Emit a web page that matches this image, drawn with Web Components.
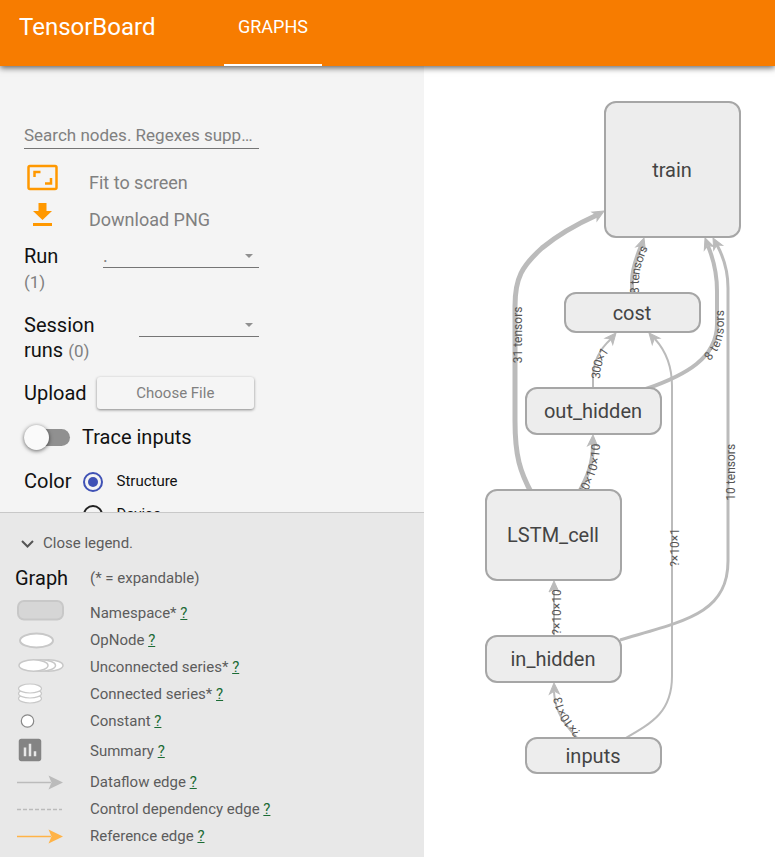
<!DOCTYPE html>
<html lang="en">
<head>
<meta charset="utf-8">
<meta name="viewport" content="width=device-width, initial-scale=1">
<title>TensorBoard</title>
<style>
  html, body {
    height: 100%;
    margin: 0;
  }
  body {
    font-family: Roboto, "Liberation Sans", sans-serif;
    background: #fff;
  }
</style>
</head>
<body>
<tb-app></tb-app>

<script>
class TbHeader extends HTMLElement {
  connectedCallback() {
    this.attachShadow({ mode: 'open' });
    this.shadowRoot.innerHTML = `
      <style>
        :host {
          display: flex;
          position: relative;
          z-index: 1;
          height: 66px;
          padding-left: 19px;
          box-sizing: border-box;
          background: #f77c00;
          color: #fff;
          line-height: 54px;
          box-shadow: 0 2px 6px rgba(0, 0, 0, 0.6);
        }
        h1 {
          margin: 0;
          width: 205px;
          font-size: 24px;
          font-weight: 400;
        }
        a {
          display: block;
          box-sizing: border-box;
          height: 66px;
          padding: 0 14px;
          border-bottom: 2px solid #fff;
          color: inherit;
          font-size: 18px;
          text-decoration: none;
        }
      </style>
      <h1>TensorBoard</h1>
      <nav><a href="#graphs">GRAPHS</a></nav>
    `;
  }
}
customElements.define('tb-header', TbHeader);

class TbAction extends HTMLElement {
  connectedCallback() {
    this.attachShadow({ mode: 'open' });
    this.shadowRoot.innerHTML = `
      <style>
        :host {
          display: block;
        }
        button {
          display: flex;
          align-items: flex-start;
          width: 100%;
          height: 37px;
          padding: 0;
          border: 0;
          background: none;
          color: #808080;
          font: 18px/38px Roboto, sans-serif;
          text-align: left;
          cursor: pointer;
        }
        .icon {
          display: flex;
          width: 65px;
        }
      </style>
      <button type="button">
        <span class="icon"><slot name="icon"></slot></span>
        <slot></slot>
      </button>
    `;
  }
}
customElements.define('tb-action', TbAction);

class TbDropdown extends HTMLElement {
  connectedCallback() {
    const value = this.getAttribute('value') || '';
    this.attachShadow({ mode: 'open' });
    this.shadowRoot.innerHTML = `
      <style>
        :host {
          display: flex;
          gap: 24px;
          align-items: flex-start;
          line-height: 25px;
        }
        label {
          flex: 1;
          font-size: 20px;
        }
        label span {
          color: #808080;
          font-size: 17px;
        }
        .field {
          position: relative;
          width: var(--field-width, 156px);
        }
        .field::after {
          content: "";
          position: absolute;
          right: 6px;
          top: 10px;
          border: 4px solid transparent;
          border-top-color: #909090;
          border-bottom: 0;
          pointer-events: none;
        }
        select {
          display: block;
          width: 100%;
          height: 24px;
          padding: 0;
          border: 0;
          border-bottom: 1px solid #757575;
          border-radius: 0;
          appearance: none;
          background: none;
          color: #808080;
          font: 18px Roboto, sans-serif;
        }
      </style>
      <label for="field">${this.getAttribute('label')} <span>(${this.getAttribute('count')})</span></label>
      <div class="field">
        <select id="field"><option>${value}</option></select>
      </div>
    `;
  }
}
customElements.define('tb-dropdown', TbDropdown);

class TbControls extends HTMLElement {
  connectedCallback() {
    this.attachShadow({ mode: 'open' });
    this.shadowRoot.innerHTML = `
      <style>
        :host {
          display: block;
          box-sizing: border-box;
          padding: 58px 24px 0;
          background: #f4f4f4;
          color: #111;
          font-size: 20px;
          line-height: 24px;
        }
        .inner {
          max-width: 235px;
        }
        input, button {
          font-family: inherit;
          margin: 0;
        }
        .search {
          display: block;
          box-sizing: border-box;
          width: 100%;
          height: 25px;
          margin-bottom: 15px;
          padding: 0 0 2px;
          border: 0;
          border-bottom: 1px solid #757575;
          background: none;
          font-size: 17px;
          text-overflow: ellipsis;
        }
        .search::placeholder {
          color: #808080;
        }
        tb-dropdown {
          margin-top: 6px;
        }
        tb-dropdown + tb-dropdown {
          --field-width: 120px;
          margin-top: 18px;
        }
        .row {
          display: flex;
          align-items: center;
        }
        .upload {
          gap: 10px;
          margin-top: 12px;
          line-height: 34px;
        }
        .upload button {
          flex: 1;
          height: 32px;
          margin-right: 5px;
          border: 0;
          border-radius: 3px;
          background: #f5f5f5;
          color: #808080;
          font-size: 15px;
          box-shadow: 0 1px 3px rgba(0, 0, 0, 0.45);
        }
        .trace {
          gap: 12px;
          margin-top: 15px;
        }
        .trace input {
          appearance: none;
          display: flex;
          align-items: center;
          width: 46px;
          height: 17px;
          border-radius: 9px;
          background: #909090;
        }
        .trace input::before {
          content: "";
          width: 25px;
          height: 25px;
          border-radius: 50%;
          background: #fafafa;
          box-shadow: 0 1px 4px rgba(0, 0, 0, 0.6);
        }
        fieldset {
          display: flex;
          gap: 12px;
          margin: 16px 0 0;
          padding: 0;
          border: 0;
          line-height: 33px;
        }
        .options {
          display: grid;
          font-size: 15px;
        }
        .option {
          display: flex;
          align-items: center;
          gap: 13px;
        }
        .option input {
          appearance: none;
          display: grid;
          place-items: center;
          width: 20px;
          height: 20px;
          border: 2px solid #222;
          border-radius: 50%;
        }
        .option input:checked {
          border-color: #3f51b5;
        }
        .option input:checked::before {
          content: "";
          width: 10px;
          height: 10px;
          border-radius: 50%;
          background: #3f51b5;
        }
      </style>
      <div class="inner">
        <input class="search" type="text" aria-label="Search nodes" placeholder="Search nodes. Regexes supported.">
        <tb-action>
          <svg slot="icon" width="38" height="28" viewBox="0 0 38 28" fill="none" stroke="#ff9800">
            <rect x="4.500" y="2" width="28" height="23" rx="1.500" stroke-width="2.500"/>
            <path d="M10.500 13V8h6M27 14v5.500h-6" stroke-width="2.500"/>
          </svg>
          Fit to screen
        </tb-action>
        <tb-action>
          <svg slot="icon" width="38" height="28" viewBox="0 0 38 28" fill="#ff9800">
            <path d="M14.500 2h8v8H28l-9.500 9L9 10h5.500zM9 22h19v3H9z"/>
          </svg>
          Download PNG
        </tb-action>
        <tb-dropdown label="Run" count="1" value="."></tb-dropdown>
        <tb-dropdown label="Session runs" count="0"></tb-dropdown>
        <div class="row upload">
          <label for="upload">Upload</label>
          <button id="upload" type="button">Choose File</button>
        </div>
        <div class="row trace">
          <input id="trace" type="checkbox" role="switch">
          <label for="trace">Trace inputs</label>
        </div>
        <fieldset aria-label="Color">
          <span>Color</span>
          <div class="options">
            <div class="option"><input id="structure" type="radio" name="color" checked><label for="structure">Structure</label></div>
            <div class="option"><input id="device" type="radio" name="color"><label for="device">Device</label></div>
          </div>
        </fieldset>
      </div>
    `;
  }
}
customElements.define('tb-controls', TbControls);

class TbLegendItem extends HTMLElement {
  connectedCallback() {
    this.attachShadow({ mode: 'open' });
    this.shadowRoot.innerHTML = `
      <style>
        :host {
          display: grid;
          grid-template-columns: 75px 1fr;
          align-items: center;
          min-height: 27px;
        }
        .icon {
          display: flex;
        }
        .text {
          padding-bottom: 2px;
        }
        a {
          color: #1b6b35;
        }
      </style>
      <span class="icon"><slot name="icon"></slot></span>
      <span class="text"><slot></slot> <a href="#help">?</a></span>
    `;
  }
}
customElements.define('tb-legend-item', TbLegendItem);

class TbLegend extends HTMLElement {
  connectedCallback() {
    this.attachShadow({ mode: 'open' });
    this.shadowRoot.innerHTML = `
      <style>
        :host {
          display: block;
          padding: 17px 15px 7px;
          border-top: 1px solid #c8c8c8;
          background: #e8e8e8;
          color: #5c5c5c;
          font-size: 15px;
        }
        button {
          display: flex;
          align-items: center;
          gap: 4px;
          height: 26px;
          padding: 0;
          border: 0;
          background: none;
          color: inherit;
          font: inherit;
        }
        .title {
          display: grid;
          grid-template-columns: 75px 1fr;
          align-items: center;
          height: 44px;
        }
        h2 {
          margin: 0;
          color: #111;
          font-size: 20px;
          font-weight: 400;
        }
        .tall {
          min-height: 34px;
        }
      </style>
      <button type="button">
        <svg width="24" height="24" viewBox="0 0 24 24" fill="none" stroke="#555" stroke-width="2">
          <path d="M7 10l5.500 5.500L18 10"/>
        </svg>
        Close legend.
      </button>
      <div class="title"><h2>Graph</h2><span>(* = expandable)</span></div>
      <tb-legend-item>
        <svg slot="icon" width="50" height="27" fill="#d6d6d6" stroke="#c8c8c8" stroke-width="2">
          <rect x="3" y="1" width="45" height="18.500" rx="6"/>
        </svg>
        Namespace*
      </tb-legend-item>
      <tb-legend-item>
        <svg slot="icon" width="50" height="27" fill="#fff" stroke="#c8c8c8" stroke-width="2">
          <ellipse cx="21.500" cy="13.500" rx="16.500" ry="7"/>
        </svg>
        OpNode
      </tb-legend-item>
      <tb-legend-item>
        <svg slot="icon" width="50" height="27" fill="#fff" stroke="#c8c8c8" stroke-width="1.500">
          <ellipse cx="33.500" cy="11.500" rx="14.500" ry="5.700"/>
          <ellipse cx="26" cy="11.500" rx="14.500" ry="5.700"/>
          <ellipse cx="18.500" cy="11.500" rx="14.500" ry="5.700"/>
        </svg>
        Unconnected series*
      </tb-legend-item>
      <tb-legend-item>
        <svg slot="icon" width="50" height="27" fill="#fff" stroke="#c8c8c8" stroke-width="1.200">
          <ellipse cx="15" cy="17.500" rx="11.500" ry="4.500"/>
          <ellipse cx="15" cy="12.500" rx="11.500" ry="4.500"/>
          <ellipse cx="15" cy="7.500" rx="11.500" ry="4.500"/>
        </svg>
        Connected series*
      </tb-legend-item>
      <tb-legend-item>
        <svg slot="icon" width="50" height="27" fill="#fff" stroke="#888" stroke-width="1.200">
          <circle cx="12.500" cy="13" r="6.200"/>
        </svg>
        Constant
      </tb-legend-item>
      <tb-legend-item class="tall">
        <svg slot="icon" width="50" height="34" fill="#848484">
          <path transform="scale(1.250)" d="M19 3H5c-1.100 0-2 .9-2 2v14c0 1.100.9 2 2 2h14c1.100 0 2-.9 2-2V5c0-1.100-.9-2-2-2zM9 17H7v-7h2v7zm4 0h-2V7h2v10zm4 0h-2v-4h2v4z"/>
        </svg>
        Summary
      </tb-legend-item>
      <tb-legend-item>
        <svg slot="icon" width="50" height="27" fill="#bbb" stroke="#bbb">
          <path d="M2 13.500h34" stroke-width="1.500"/>
          <path d="M48 13.500L33.500 6.500l3 7-3 7z" stroke="none"/>
        </svg>
        Dataflow edge
      </tb-legend-item>
      <tb-legend-item>
        <svg slot="icon" width="50" height="27" stroke="#bbb">
          <path d="M2 13.500h45" stroke-width="1.500" stroke-dasharray="4 2"/>
        </svg>
        Control dependency edge
      </tb-legend-item>
      <tb-legend-item>
        <svg slot="icon" width="50" height="27" fill="#ffb347" stroke="#ffb347">
          <path d="M2 13.500h34" stroke-width="1.500"/>
          <path d="M48 13.500L33.500 6.500l3 7-3 7z" stroke="none"/>
        </svg>
        Reference edge
      </tb-legend-item>
    `;
  }
}
customElements.define('tb-legend', TbLegend);

const NODES = [
  { name: 'train', x: 181, y: 36, h: 135 },
  { name: 'cost', x: 141, y: 227, h: 39 },
  { name: 'out_hidden', x: 102, y: 322, h: 46 },
  { name: 'LSTM_cell', x: 62, y: 424, h: 90 },
  { name: 'in_hidden', x: 62, y: 570, h: 46 },
  { name: 'inputs', x: 102, y: 672, h: 35 }
];

// edges run from source to target; tip is [x, y, angle] of the arrowhead, at is the label centre along the line
const EDGES = [
  { label: '31 tensors', width: 5, tip: [180, 145, -30], at: 162, d: 'M108 428C96 406 91 390 91 355V240C91 212 98 200 118 182C135 168 153 158 173 149' },
  { label: '8 tensors', width: 4, tip: [220, 172, -72], at: 37, d: 'M208 240V215C208 202 213 190 217 180L219 175' },
  { label: '300×1', width: 2, tip: [192, 267, -50], at: 28, d: 'M169 324V312C169 294 178 281 187 273' },
  { label: '8 tensors', width: 4, tip: [281, 172, -111], at: 92, d: 'M222 323C262 309 293 292 293 258V225C293 206 289 192 284 180' },
  { label: '10 tensors', width: 3, tip: [289, 172, -118], at: 235, d: 'M196 574C260 555 304 548 304 495V222C304 204 299 190 293 179' },
  { label: '300×10×10', width: 4, tip: [169, 369, -88], at: 44, d: 'M144 446L154 428C164 410 169 397 169 378V373' },
  { label: '?×10×1', width: 2, tip: [225, 267, -130], at: 213, d: 'M200 673C230 656 248 645 248 610V320C248 297 240 283 231 273' },
  { label: '?×10×10', width: 2, tip: [130, 515, -90], at: 26, d: 'M130 572V523' },
  { label: '?×10×13', width: 2, tip: [130, 617, -92], at: 27, d: 'M155 674C142 660 131 647 130 626' }
];

class TbGraph extends HTMLElement {
  connectedCallback() {
    const edges = EDGES.map((e, i) => `
      <path id="edge${i}" class="edge" d="${e.d}" stroke-width="${e.width}"/>
      <path class="tip" transform="translate(${e.tip[0]} ${e.tip[1]}) rotate(${e.tip[2]})" d="M0 0L-11 -5L-8 0L-11 5z"/>
      <text class="edge-label" dy="7"><textPath href="#edge${i}" startOffset="${e.at}">${e.label}</textPath></text>
    `).join('');
    const nodes = NODES.map(n => `
      <rect x="${n.x}" y="${n.y}" width="135" height="${n.h}" rx="11"/>
      <text class="name" x="${n.x + 67}" y="${n.y + n.h / 2 + 7}">${n.name}</text>
    `).join('');

    this.attachShadow({ mode: 'open' });
    this.shadowRoot.innerHTML = `
      <style>
        :host {
          display: block;
          background: #fff;
          overflow: hidden;
        }
        svg {
          display: block;
          width: 100%;
          height: 100%;
        }
        text {
          text-anchor: middle;
          fill: #444;
        }
        rect {
          fill: #ededed;
          stroke: #a6a6a6;
          stroke-width: 2;
        }
        .edge {
          fill: none;
          stroke: #bbb;
        }
        .tip {
          fill: #bbb;
          stroke: #bbb;
        }
        .name {
          font-size: 20px;
        }
        .edge-label {
          fill: #555;
          font-size: 12px;
        }
      </style>
      <svg viewBox="0 0 351 791" role="img" aria-label="Graph">
        ${edges}
        ${nodes}
      </svg>
    `;
  }
}
customElements.define('tb-graph', TbGraph);

class TbApp extends HTMLElement {
  connectedCallback() {
    this.attachShadow({ mode: 'open' });
    this.shadowRoot.innerHTML = `
      <style>
        :host {
          display: flex;
          flex-direction: column;
          height: 100vh;
        }
        main {
          flex: 1;
          display: grid;
          grid-template-columns: minmax(0, 424px) minmax(0, 1fr);
          grid-template-rows: minmax(0, 1fr);
          min-height: 0;
        }
        aside {
          display: flex;
          flex-direction: column;
          min-height: 0;
        }
        tb-controls {
          flex: 1;
          min-height: 0;
          overflow: hidden;
        }
      </style>
      <tb-header></tb-header>
      <main>
        <aside>
          <tb-controls></tb-controls>
          <tb-legend></tb-legend>
        </aside>
        <tb-graph></tb-graph>
      </main>
    `;
  }
}
customElements.define('tb-app', TbApp);
</script>
</body>
</html>
